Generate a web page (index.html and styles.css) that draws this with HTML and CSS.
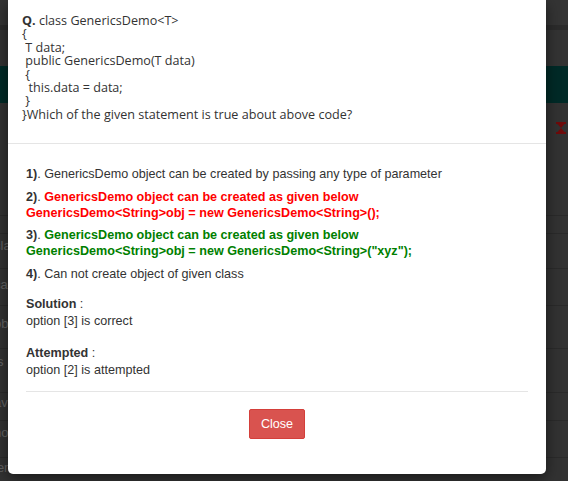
FILE: index.html
```html
<!DOCTYPE html>
<html>
<head>
<meta charset="utf-8">
<link rel="stylesheet" href="styles.css">
</head>
<body>
<div class="page">
  <div class="band band-top"></div>
  <div class="band band-dark"></div>
  <div class="band band-nav"></div>
  <div class="band band-teal"></div>
  <div class="band band-tools">
    <svg class="tool-icon" width="9" height="10" viewBox="0 0 9 10" aria-hidden="true">
      <circle cx="4.5" cy="5" r="3.5" fill="none" stroke="#5c0b0b" stroke-width="2"/>
    </svg>
    <svg class="tool-icon" width="10" height="12" viewBox="0 0 10 12" aria-hidden="true">
      <rect x="0" y="0" width="10" height="2" fill="#6e0b0b"/>
      <rect x="0" y="10" width="10" height="2" fill="#6e0b0b"/>
      <path d="M1.5 2 H8.5 L5 6 Z" fill="#6e0b0b"/>
      <path d="M5 6 L8.5 10 H1.5 Z" fill="#6e0b0b"/>
    </svg>
  </div>
  <div class="row r1"></div>
  <div class="row r2"><span class="frag">cla</span></div>
  <div class="row r3"><span class="frag">cas</span></div>
  <div class="row r4"><span class="frag">obj</span></div>
  <div class="row r5"><span class="frag">is</span></div>
  <div class="row r6"><span class="frag">ave</span></div>
  <div class="row r7"><span class="frag">no /</span></div>
  <div class="row r8"><span class="frag">len</span></div>
</div>

<div class="modal">
  <div class="modal-header">
    <p class="question"><b>Q.</b> class GenericsDemo&lt;T&gt;<br>{<br>&nbsp;T data;<br>&nbsp;public GenericsDemo(T data)<br>&nbsp;{<br>&nbsp;&nbsp;this.data = data;<br>&nbsp;}<br>}Which of the given statement is true about above code?</p>
  </div>
  <div class="modal-body">
    <div class="option"><b>1)</b>. GenericsDemo object can be created by passing any type of parameter</div>
    <div class="option"><b>2)</b>. <span class="wrong">GenericsDemo object can be created as given below<br>GenericsDemo&lt;String&gt;obj = new GenericsDemo&lt;String&gt;();</span></div>
    <div class="option"><b>3)</b>. <span class="right">GenericsDemo object can be created as given below<br>GenericsDemo&lt;String&gt;obj = new GenericsDemo&lt;String&gt;("xyz");</span></div>
    <div class="option"><b>4)</b>. Can not create object of given class</div>

    <div class="result solution"><b>Solution</b> :<br>option [3] is correct</div>
    <div class="result"><b>Attempted</b> :<br>option [2] is attempted</div>

    <hr class="divider">
    <div class="footer">
      <button class="btn-close" type="button">Close</button>
    </div>
  </div>
</div>
</body>
</html>
```

FILE: styles.css
```css
html, body {
  margin: 0;
  padding: 0;
}
body {
  width: 568px;
  height: 481px;
  overflow: hidden;
  background: #323232;
  position: relative;
  font-family: "Liberation Sans", Arial, sans-serif;
}

/* dimmed page behind the dialog */
.page {
  display: flex;
  flex-direction: column;
}
.band-top { height: 25px; background: #343434; }
.band-dark { height: 5px; background: #2b2b2b; }
.band-nav { height: 36px; background: #333333; }
.band-teal { height: 37px; background: #012a27; }
.band-tools {
  height: 112px;
  background: #323232;
  display: flex;
  justify-content: flex-end;
  align-items: flex-start;
  gap: 10px;
  padding: 19px 2px 0 0;
  box-sizing: border-box;
}
.tool-icon { display: block; }
.tool-icon:first-child { margin-top: 3px; }

.row {
  border-top: 1px solid #2a2a2a;
  box-sizing: border-box;
  color: #626262;
  font-size: 13px;
  line-height: 15px;
  padding-top: 4px;
  overflow: hidden;
  white-space: nowrap;
}
.frag { display: inline-block; margin-left: -6px; }
.r1 { height: 18px; }
.r2 { height: 35px; }
.r3 { height: 37px; padding-top: 8px; }
.r4 { height: 43px; padding-top: 10px; }
.r5 { height: 44px; padding-top: 5px; }
.r6 { height: 28px; padding-top: 2px; }
.r7 { height: 37px; padding-top: 4px; }
.r8 { height: 30px; padding-top: 2px; }

/* dialog */
.modal {
  position: absolute;
  left: 8px;
  top: 0;
  width: 538px;
  height: 474px;
  background: #fff;
  border-radius: 0 0 5px 5px;
  box-shadow: 0 4px 14px rgba(0, 0, 0, 0.5);
  color: #333;
}
.modal-header {
  padding: 14px 14px 15px 14px;
  border-bottom: 1px solid #e5e5e5;
  height: 144px;
  box-sizing: border-box;
}
.question {
  margin: 0;
  font-family: "Open Sans", sans-serif;
  font-size: 12.6px;
  line-height: 13.4px;
  color: #333;
}
.question b { font-weight: 700; }

.modal-body {
  padding: 22px 18px 0 18px;
  font-size: 12.6px;
}
.option {
  line-height: 16px;
  margin-bottom: 6.7px;
}
.wrong { color: #ff0000; font-weight: 700; }
.right { color: #008000; font-weight: 700; }

.result {
  line-height: 17px;
}
.solution { margin-top: 14px; margin-bottom: 15px; }

.divider {
  border: 0;
  border-top: 1px solid #e5e5e5;
  margin: 12px 0 0 0;
}
.footer {
  display: flex;
  justify-content: center;
  padding-top: 17px;
}
.btn-close {
  width: 56px;
  height: 30px;
  background: #d9534f;
  border: 1px solid #d43f3a;
  border-radius: 2px;
  color: #fff;
  font-family: "Liberation Sans", Arial, sans-serif;
  font-size: 12.6px;
  padding: 0;
}
```
